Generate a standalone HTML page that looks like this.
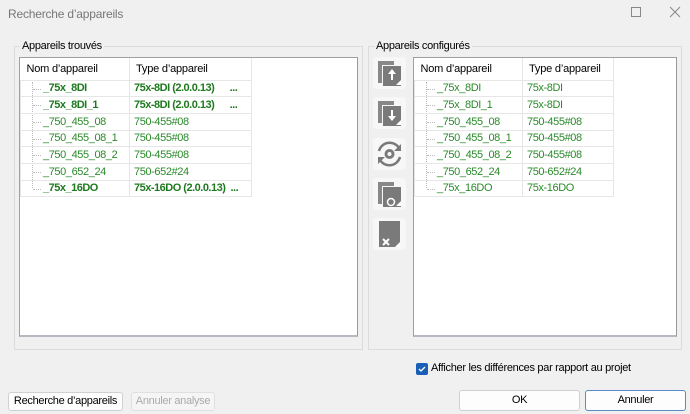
<!DOCTYPE html>
<html><head><meta charset="utf-8"><style>
*{box-sizing:border-box;margin:0;padding:0}
body{width:690px;height:414px;background:#f0f0f0;font-family:"Liberation Sans",sans-serif;font-size:11px;color:#000;position:relative;overflow:hidden}
.abs{position:absolute}
.title{left:8px;top:7px;font-size:12px;color:#777;letter-spacing:-0.2px}
.grp{border:1px solid #dcdcdc;}
.legend{background:#f0f0f0;padding:0 2px;font-size:11px;letter-spacing:-0.3px}
.list{background:#fff;border:1px solid #a0a0a0;border-right-color:#999;border-bottom:2px solid #b8b8c0}
table{border-collapse:collapse;position:absolute;left:0;top:0;table-layout:fixed}
td{height:16.7px;border:1px solid #e6e6e6;padding:0;white-space:nowrap;color:#2a8a2a;font-size:11px;letter-spacing:-0.4px;overflow:hidden}
th{height:22px;font-weight:normal;text-align:left;padding-left:6px;border-right:1px solid #e6e6e6;font-size:11px;letter-spacing:-0.2px}
td.n{padding-left:22px;position:relative}
td.t{padding-left:4px}
td.b{font-weight:bold;color:#1f7a1f;letter-spacing:-0.5px}
td.n::before{content:"";position:absolute;left:12px;top:8px;width:8px;border-top:1px dotted #bbb}
.tree{position:absolute;border-left:1px dotted #bbb}
.btn{background:#fdfdfd;border:1px solid #d0d0d0;border-radius:3px;text-align:center;line-height:17px;font-size:11px;letter-spacing:-0.3px}
.ib{position:absolute;left:373px;width:33px;height:32px;background:#f7f7f7;border-radius:3px}
</style></head><body>
<div class="abs title">Recherche d’appareils</div>
<svg class="abs" style="left:630px;top:6px" width="12" height="12"><rect x="1.5" y="1.5" width="9" height="9" fill="none" stroke="#888"/></svg>
<svg class="abs" style="left:669px;top:6px" width="12" height="12"><path d="M1 1L11 11M11 1L1 11" stroke="#888"/></svg>

<div class="abs grp" style="left:14px;top:46px;width:349px;height:304px"></div>
<div class="abs legend" style="left:20px;top:40px">Appareils trouvés</div>
<div class="abs list" style="left:19px;top:57px;width:339px;height:280px">
<div class="tree" style="left:12px;top:24px;height:106px"></div>
<table style="width:232px">
<tr><th style="width:109px">Nom d’appareil</th><th>Type d’appareil</th></tr>
<tr><td class="n b">_75x_8DI</td><td class="t b">75x-8DI (2.0.0.13) &nbsp;&nbsp;&nbsp;&nbsp;&nbsp;...</td></tr>
<tr><td class="n b">_75x_8DI_1</td><td class="t b">75x-8DI (2.0.0.13) &nbsp;&nbsp;&nbsp;&nbsp;&nbsp;...</td></tr>
<tr><td class="n">_750_455_08</td><td class="t">750-455#08</td></tr>
<tr><td class="n">_750_455_08_1</td><td class="t">750-455#08</td></tr>
<tr><td class="n">_750_455_08_2</td><td class="t">750-455#08</td></tr>
<tr><td class="n">_750_652_24</td><td class="t">750-652#24</td></tr>
<tr><td class="n b">_75x_16DO</td><td class="t b">75x-16DO (2.0.0.13) &nbsp;...</td></tr>
</table></div>

<div class="abs grp" style="left:368px;top:46px;width:314px;height:304px"></div>
<div class="abs legend" style="left:374px;top:40px">Appareils configurés</div>
<div class="abs list" style="left:413px;top:57px;width:264px;height:280px">
<div class="tree" style="left:12px;top:24px;height:106px"></div>
<table style="width:200px">
<tr><th style="width:108px">Nom d’appareil</th><th>Type d’appareil</th></tr>
<tr><td class="n">_75x_8DI</td><td class="t">75x-8DI</td></tr>
<tr><td class="n">_75x_8DI_1</td><td class="t">75x-8DI</td></tr>
<tr><td class="n">_750_455_08</td><td class="t">750-455#08</td></tr>
<tr><td class="n">_750_455_08_1</td><td class="t">750-455#08</td></tr>
<tr><td class="n">_750_455_08_2</td><td class="t">750-455#08</td></tr>
<tr><td class="n">_750_652_24</td><td class="t">750-652#24</td></tr>
<tr><td class="n">_75x_16DO</td><td class="t">75x-16DO</td></tr>
</table></div>

<div class="ib" style="top:57px"><svg width="33" height="32"><path d="M5 4h16v4H9v18H5z" fill="#888"/><path d="M10 9h18v20H10z" fill="#7a7a7a"/><path d="M19 12l-4 5h3v6h2v-6h3z" fill="#fff"/><path d="M23 28l5-5v5z" fill="#fff"/></svg></div>
<div class="ib" style="top:97px"><svg width="33" height="32"><path d="M5 4h16v4H9v18H5z" fill="#888"/><path d="M10 9h18v20H10z" fill="#7a7a7a"/><path d="M19 24l-4-5h3v-6h2v6h3z" fill="#fff"/><path d="M23 28l5-5v5z" fill="#fff"/></svg></div>
<div class="ib" style="top:138px"><svg width="33" height="32"><path d="M6 13a11 11 0 0 1 20-3" fill="none" stroke="#7a7a7a" stroke-width="2.5"/><path d="M27 19a11 11 0 0 1-20 3" fill="none" stroke="#7a7a7a" stroke-width="2.5"/><path d="M28 6v7h-7z" fill="#7a7a7a"/><path d="M5 26v-7h7z" fill="#7a7a7a"/><circle cx="16.5" cy="16" r="5" fill="#7a7a7a"/><circle cx="16.5" cy="16" r="2" fill="#f7f7f7"/></svg></div>
<div class="ib" style="top:178px"><svg width="33" height="32"><path d="M5 4h16v4H9v18H5z" fill="#888"/><path d="M10 9h18v20H10z" fill="#7a7a7a"/><circle cx="18" cy="24" r="3.5" fill="none" stroke="#fff" stroke-width="1.5"/><path d="M23 28l5-5v5z" fill="#fff"/></svg></div>
<div class="ib" style="top:218px"><svg width="33" height="32"><path d="M6 3h21v26H6z" fill="#7a7a7a"/><path d="M10 21l6 6M16 21l-6 6" stroke="#fff" stroke-width="2"/><path d="M22 29l5-5v5z" fill="#fff"/></svg></div>

<div class="abs" style="left:416px;top:363px;width:12px;height:12px;background:#1b5eb8;border-radius:2px"><svg width="12" height="12"><path d="M3 6l2 2 4-4" fill="none" stroke="#fff" stroke-width="1.3"/></svg></div>
<div class="abs" style="left:431px;top:362px;letter-spacing:-0.3px">Afficher les différences par rapport au projet</div>

<div class="abs btn" style="left:8px;top:392px;width:115px;height:19px">Recherche d’appareils</div>
<div class="abs btn" style="left:131px;top:392px;width:84px;height:19px;color:#aaa;border-color:#e0e0e0;background:#f5f5f5">Annuler analyse</div>
<div class="abs btn" style="left:459px;top:390px;width:121px;height:21px;line-height:19px">OK</div>
<div class="abs btn" style="left:585px;top:390px;width:101px;height:21px;line-height:19px;border-color:#5a8ac8">Annuler</div>
</body></html>
